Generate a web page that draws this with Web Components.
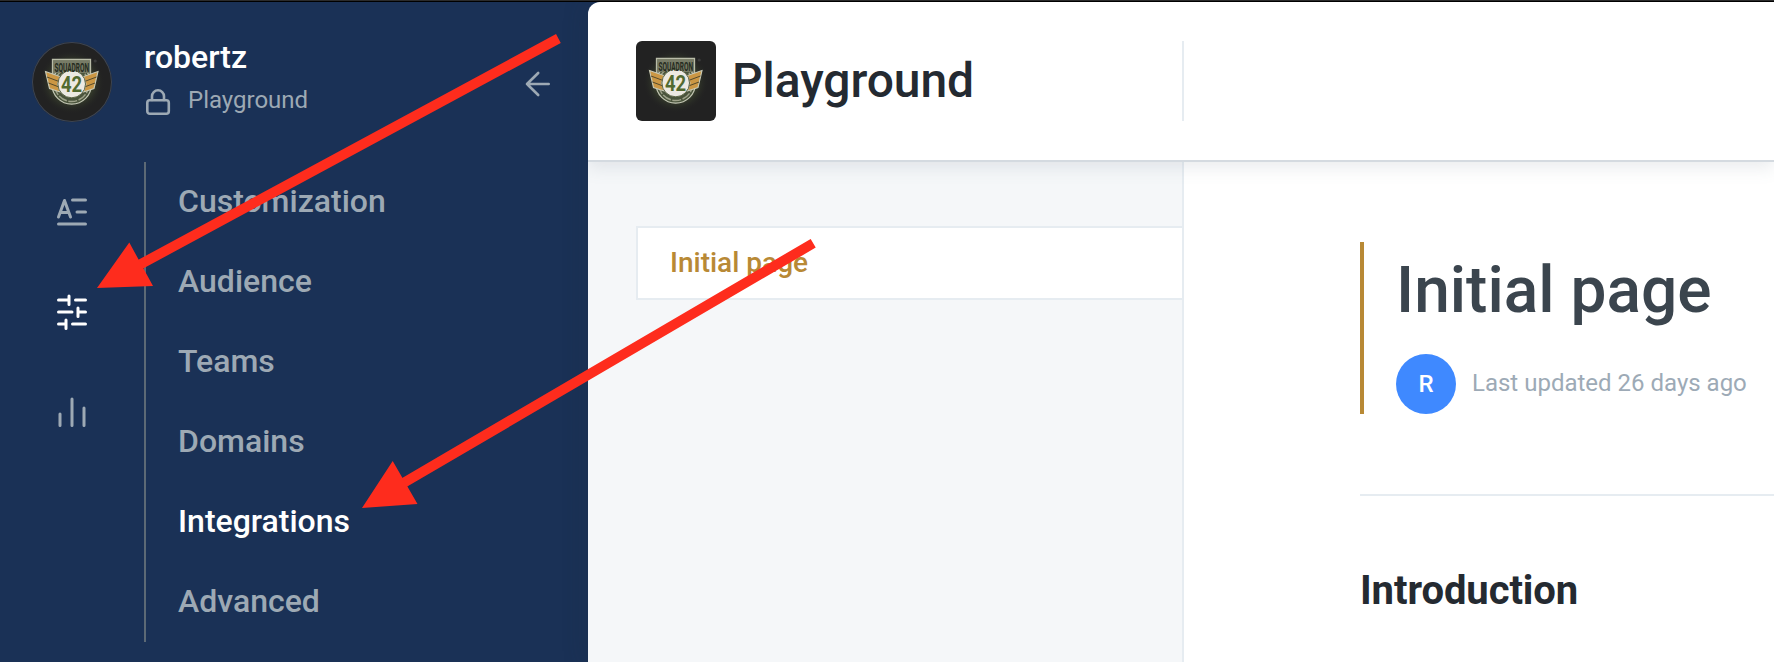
<!DOCTYPE html>
<html lang="en">
<head>
<meta charset="utf-8">
<title>Playground</title>
<style>
html,body{margin:0;height:100%;overflow:hidden;background:#1a3156;font-family:Roboto,"Liberation Sans",sans-serif}
</style>
</head>
<body>
<app-shell></app-shell>
<script>
const define = (name, html) => customElements.define(name, class extends HTMLElement {
  constructor() {
    super();
    const t = document.createElement('template');
    t.innerHTML = html;
    this.attachShadow({ mode: 'open' }).append(t.content.cloneNode(true));
  }
});

define('squadron-badge', `
<style>
:host{display:block;flex:none;width:80px;height:80px;background:#222;border-radius:6px}
:host([round]){border-radius:50%;box-shadow:inset 0 0 0 1px #3d4553}
svg{display:block}
text{font-family:Roboto,"Liberation Sans",sans-serif}
</style>
<svg width="80" height="80" viewBox="0 0 80 80">
  <defs><radialGradient id="g"><stop offset="0" stop-color="#71864a"/><stop offset=".55" stop-color="#4b5935" stop-opacity=".8"/><stop offset="1" stop-color="#222" stop-opacity="0"/></radialGradient></defs>
  <ellipse cx="39.700" cy="40" rx="33" ry="32" fill="url(#g)"/>
  <path d="M20.500 17.500H58.500V36H20.500Z" fill="#777b66" stroke="#b9bca8" stroke-width="1.300"/>
  <circle cx="39.700" cy="42.500" r="19.700" fill="#4a543c" stroke="#c3c6b4" stroke-width="1.200"/>
  <circle cx="39.700" cy="42.500" r="17" fill="none" stroke="#9ea28a" stroke-width="1.500" stroke-dasharray="9 1.500"/>
  <path d="M21.200 18.200H57.800V31H21.200Z" fill="#777b66"/>
  <path d="M13.500 29.500L28 34.500 25.500 42 28 50 17.500 46.500Z" fill="#cb9744" stroke="#c9cab6" stroke-width="1.100"/>
  <path d="M66 29.500L51.500 34.500 54 42 51.500 50 62 46.500Z" fill="#cb9744" stroke="#c9cab6" stroke-width="1.100"/>
  <path d="M15 35L27 39.500M16.500 41L27 45M64.500 35L52.500 39.500M63 41L52.500 45" stroke="#544a2c" stroke-width="1"/>
  <circle cx="39.700" cy="42" r="13.800" fill="#ece9e2" stroke="#5c6546" stroke-width="1"/>
  <text transform="translate(22.500 30) scale(.5 1)" font-size="13" font-weight="700" fill="#252b20">SQUADRON</text>
  <text transform="translate(29 50) scale(.86 1)" font-size="21.500" font-weight="700" fill="#526a30">42</text>
  <circle cx="63.200" cy="19" r="1.600" fill="#3a3a3a"/>
</svg>`);

define('space-identity', `
<style>
:host{display:flex;align-items:flex-start;height:120px;padding:40px 38px 0 32px;box-sizing:border-box}
.text{flex:1;padding:0 0 0 32px}
.name{font-size:32px;font-weight:500;line-height:36px;color:#fff;margin-top:-3px}
.space{display:flex;align-items:center;height:36px;margin-top:7px;font-size:24px;line-height:36px;color:#9da9b4}
.space svg{margin:4px 17px 0 0}
.back{margin-top:28px}
svg{display:block;fill:none;stroke:#9da9b4;stroke-width:2.600;stroke-linecap:round;stroke-linejoin:round}
</style>
<squadron-badge round></squadron-badge>
<div class="text">
  <div class="name"><slot name="name"></slot></div>
  <div class="space"><svg width="27" height="28" viewBox="0 0 27 28"><rect x="3.300" y="12.300" width="21.500" height="13.400" rx="2.500"/><path d="M8 12V8.300a6 6 0 0 1 12 0V12"/></svg><slot name="space"></slot></div>
</div>
<svg class="back" width="26" height="28" viewBox="0 0 26 28"><path d="M24.700 14H3M14.200 3L3 14 14.200 25"/></svg>`);

define('icon-rail', `
<style>
:host{display:flex;flex-direction:column;width:144px;align-items:center;padding-top:32px;gap:64px;box-sizing:border-box}
svg{display:block;fill:none;stroke:#9da9b4;stroke-width:3;stroke-linecap:round;stroke-linejoin:round}
.on{stroke:#fff}
</style>
<svg width="36" height="36" viewBox="0 0 36 36"><path d="M18.500 6H31.500M23 18H31.500M4.500 30H31.500M4.500 23L10.500 6.500 16.500 23M6.500 18.500H14.500"/></svg>
<svg class="on" width="36" height="36" viewBox="0 0 36 36"><path d="M4.500 6H15M15 2V10.500M21.500 6H31.500M4.500 18H18M24 14V22.500M24 18H31.500M4.500 30H12M12 26V34.500M18.500 30H31.500"/></svg>
<svg width="36" height="36" viewBox="0 0 36 36"><path d="M6 20V31.500M18 5V31.500M30 14V31.500"/></svg>`);

define('menu-item', `
<style>
:host{display:flex;align-items:center;height:80px;box-sizing:border-box;padding-bottom:2px;font-size:32px;font-weight:500;color:#9da9b4}
:host([active]){color:#fff}
</style><slot></slot>`);

define('settings-sidebar', `
<style>
:host{display:flex;flex-direction:column;width:588px;flex:none;background:#1a3156}
.body{display:flex;margin-top:40px}
nav{border-left:2px solid #5c6975;padding-left:32px;height:480px}
</style>
<space-identity><span slot="name">robertz</span><span slot="space">Playground</span></space-identity>
<div class="body"><icon-rail></icon-rail><nav><slot></slot></nav></div>`);

define('space-header', `
<style>
:host{display:flex;height:160px;box-sizing:border-box;border-bottom:2px solid #d4dae0;background:#fff;padding:39px 0 0 48px;position:relative;box-shadow:0 6px 16px rgba(116,129,141,.15)}
.brand{display:flex;gap:16px;width:546px;height:80px;border-right:2px solid #e6ecf1}
h1{margin:0;font-size:48px;font-weight:500;line-height:80px;color:#242a31;letter-spacing:-.08px}
</style>
<div class="brand"><squadron-badge></squadron-badge><h1><slot></slot></h1></div>`);

define('page-tree', `
<style>
:host{display:block;width:596px;flex:none;box-sizing:border-box;background:#f5f7f9;border-right:2px solid #e6ecf1;padding:64px 0 0 48px}
.item{display:flex;align-items:center;height:74px;box-sizing:border-box;border:2px solid #e6ecf1;border-right:0;background:#fff;padding:0 0 2px 32px;font-size:28px;font-weight:500;color:#b88935}
</style>
<div class="item"><slot></slot></div>`);

define('page-content', `
<style>
:host{display:block;flex:1;background:#fff;padding:80px 0 0 176px;box-sizing:border-box}
.title{border-left:4px solid #b88935;padding-left:32px;height:172px;box-sizing:border-box;white-space:nowrap}
h1{margin:0;font-size:64px;font-weight:500;line-height:98px;color:#3b454e}
.meta{display:flex;align-items:center;gap:16px;margin-top:14px;font-size:24px;color:#9daab6}
.avatar{display:flex;align-items:center;justify-content:center;width:60px;height:60px;border-radius:50%;background:#3f89ff;color:#fff;font-weight:500}
hr{border:0;height:2px;background:#e6ecf1;margin:80px 0 64px}
h2{margin:0;font-size:40px;font-weight:700;line-height:62px;color:#242a31;letter-spacing:-.08px}
.when{position:relative;top:-1px}
</style>
<div class="title"><h1><slot name="title"></slot></h1><div class="meta"><span class="avatar">R</span><span class="when"><slot name="updated"></slot></span></div></div>
<hr><h2><slot name="section"></slot></h2>`);

define('callout-arrows', `
<style>:host{display:block;position:absolute;inset:-1px 0 0;z-index:5}svg{display:block}</style>
<svg width="1774" height="662" fill="#fe2c1d" stroke="#fe2c1d"><path d="M558.400 38.500L138 265.600M813.200 243.300L400 485" fill="none" stroke-width="10"/><path d="M97 288L129.300 242.500 153 286ZM362 508L392.700 461 417.500 504Z" stroke="none"/></svg>`);

define('app-shell', `
<style>
:host{display:flex;position:relative;width:1774px;height:662px;box-sizing:border-box;border-top:1px solid #2b2b2b}
.window{display:flex;flex:1;border-top:1px solid #000}
main{display:flex;flex-direction:column;flex:1;min-width:0;border-radius:12px 0 0 0;overflow:hidden}
.wrap{display:flex;flex:1;min-width:0;border-radius:12px 0 0 0;box-shadow:0 0 24px rgba(32,48,60,.28);clip-path:inset(0 0 0 -30px)}
.cols{display:flex;flex:1}
</style>
<div class="window">
<settings-sidebar>
  <menu-item>Customization</menu-item><menu-item>Audience</menu-item><menu-item>Teams</menu-item><menu-item>Domains</menu-item><menu-item active>Integrations</menu-item><menu-item>Advanced</menu-item>
</settings-sidebar>
<div class="wrap"><main>
  <space-header>Playground</space-header>
  <div class="cols">
    <page-tree>Initial page</page-tree>
    <page-content><span slot="title">Initial page</span><span slot="updated">Last updated 26 days ago</span><span slot="section">Introduction</span></page-content>
  </div>
</main></div>
</div>
<callout-arrows></callout-arrows>`);
</script>
</body>
</html>
